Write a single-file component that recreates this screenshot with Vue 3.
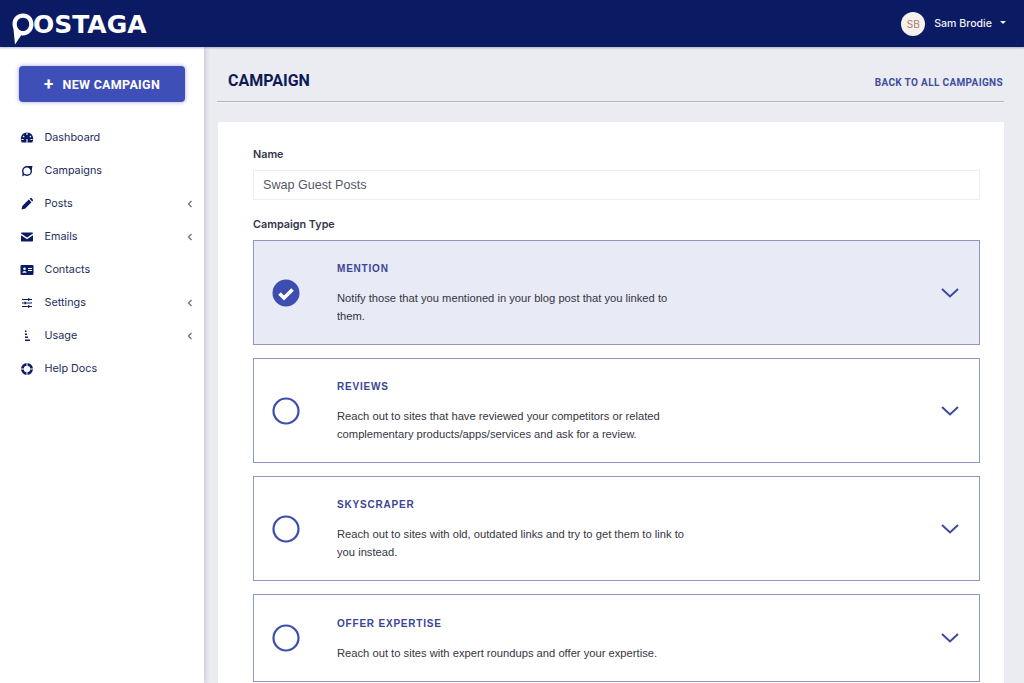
<script setup>
const nav = [
  { label: 'Dashboard', icon: 'dash' },
  { label: 'Campaigns', icon: 'camp' },
  { label: 'Posts', icon: 'pen', more: true },
  { label: 'Emails', icon: 'mail', more: true },
  { label: 'Contacts', icon: 'card' },
  { label: 'Settings', icon: 'sliders', more: true },
  { label: 'Usage', icon: 'usage', more: true },
  { label: 'Help Docs', icon: 'help' },
]
const options = [
  { title: 'MENTION', text: ['Notify those that you mentioned in your blog post that you linked to', 'them.'], selected: true },
  { title: 'REVIEWS', text: ['Reach out to sites that have reviewed your competitors or related', 'complementary products/apps/services and ask for a review.'] },
  { title: 'SKYSCRAPER', text: ['Reach out to sites with old, outdated links and try to get them to link to', 'you instead.'] },
  { title: 'OFFER EXPERTISE', text: ['Reach out to sites with expert roundups and offer your expertise.'] },
]
</script>

<template>
  <div class="page">
    <header class="topbar">
      <div class="logo">
        <svg class="pin" width="23" height="32" viewBox="0 0 23 32">
          <path fill="#fff" fill-rule="evenodd" d="M11 .5C4.900 .5 .5 5 .5 11c0 2 .4 3.700 1 5.200L3 31.500l6.200-9.200c.6.1 1.200.2 1.800.2 6.100 0 10.500-5.200 10.500-11.200C21.500 5 17.100 .5 11 .5zm0 4.300c3.600 0 6.200 2.800 6.200 6.500s-2.600 6.800-6.200 6.800-6.200-3.100-6.200-6.800 2.600-6.500 6.200-6.500z"/>
        </svg>
        <span class="logo-text">OSTAGA</span>
      </div>
      <div class="user">
        <span class="avatar">SB</span>
        <span class="user-name">Sam Brodie</span>
        <span class="caret"></span>
      </div>
    </header>

    <div class="body">
      <aside class="sidebar">
        <button class="new-btn"><span class="plus">+</span>NEW CAMPAIGN</button>
        <nav class="nav">
          <a v-for="item in nav" :key="item.label" class="nav-item">
            <svg class="nav-icon" width="14" height="14" viewBox="0 0 14 14">
              <template v-if="item.icon === 'dash'">
                <path fill="#0b1a63" d="M7 1.500C3.400 1.500 .8 4.300 .8 8c0 1.300 .4 2.500 1 3.500h10.400c.6-1 1-2.200 1-3.500 0-3.700-2.600-6.500-6.200-6.500z"/>
                <path stroke="#fff" stroke-width="1.100" fill="none" d="M7 2v2M3 5l1.300 1.200M11 5 9.700 6.200M1.500 8.500h2M10.500 8.500h2M7 11.500V8"/>
              </template>
              <template v-else-if="item.icon === 'camp'">
                <circle cx="7" cy="7" r="4.300" fill="none" stroke="#0b1a63" stroke-width="1.400"/>
                <path fill="#0b1a63" d="M2.200 12.500 2.800 8.500 5 10.800zM7.500 2h5l-.8 4-1.500-.5z"/>
              </template>
              <path v-else-if="item.icon === 'pen'" fill="#0b1a63" d="M1.500 12.500 2.300 9 8.800 2.500l2.700 2.700L5 11.700zM9.600 1.800l.7-.6c.4-.3 1-.3 1.300 0l1.200 1.200c.3.4.3.9 0 1.300l-.6.700z"/>
              <template v-else-if="item.icon === 'mail'">
                <path fill="#0b1a63" d="M1 3.500C1 2.900 1.400 2.500 2 2.500h10c.6 0 1 .4 1 1L7 7.500 1 3.500zM1 5.200l6 4 6-4v5.300c0 .6-.4 1-1 1H2c-.6 0-1-.4-1-1z"/>
              </template>
              <template v-else-if="item.icon === 'card'">
                <rect x=".5" y="2" width="13" height="10" rx="1.200" fill="#0b1a63"/>
                <circle cx="4.500" cy="5.800" r="1.300" fill="#fff"/>
                <path fill="#fff" d="M2.500 9.800c0-1.200.9-1.900 2-1.900s2 .7 2 1.900zM8 5h4v1H8zM8 7h4v1H8z"/>
              </template>
              <g v-else-if="item.icon === 'sliders'" fill="#0b1a63">
                <path d="M2 3h10v.9H2zM2 6.500h10v.9H2zM2 10h10v.9H2z"/>
                <path d="M8 2.200h1.400v2.500H8zM4.500 5.700h1.400v2.500H4.500zM8 9.200h1.400v2.500H8z"/>
              </g>
              <g v-else-if="item.icon === 'usage'" fill="#0b1a63">
                <path d="M5 1.500h1.500v1.500H5zM5 4.500h2v1.500H5zM5 7.500h3v1.500H5zM5 10.500h5v1.500H5z"/>
              </g>
              <template v-else>
                <circle cx="7" cy="7" r="4.600" fill="none" stroke="#0b1a63" stroke-width="2.800"/>
                <path stroke="#fff" stroke-width="1" d="M7 .8v3.400M7 9.800v3.400M.8 7h3.400M9.800 7h3.400"/>
              </template>
            </svg>
            <span class="nav-label">{{ item.label }}</span>
            <svg v-if="item.more" class="nav-more" width="6" height="8" viewBox="0 0 6 8">
              <path d="M4.500 1 1.500 4l3 3" fill="none" stroke="#6b7088" stroke-width="1.300"/>
            </svg>
          </a>
        </nav>
      </aside>

      <main class="main">
        <div class="title-row">
          <h1 class="title">CAMPAIGN</h1>
          <a class="back">BACK TO ALL CAMPAIGNS</a>
        </div>
        <section class="card">
          <label class="field-label">Name</label>
          <div class="input">Swap Guest Posts</div>
          <label class="field-label type-label">Campaign Type</label>
          <div class="options">
            <div v-for="o in options" :key="o.title" class="option" :class="{ selected: o.selected }">
              <svg v-if="o.selected" class="radio" width="28" height="28" viewBox="0 0 28 28">
                <circle cx="14" cy="14" r="13.500" fill="#3d4db0"/>
                <path d="M7.500 14.500 12 19l8.500-8.500" fill="none" stroke="#fff" stroke-width="3.600"/>
              </svg>
              <svg v-else class="radio" width="28" height="28" viewBox="0 0 28 28">
                <circle cx="14" cy="14" r="12.500" fill="none" stroke="#3d4db0" stroke-width="2.200"/>
              </svg>
              <div class="option-text">
                <div class="option-title">{{ o.title }}</div>
                <p class="option-desc"><span v-for="line in o.text" :key="line" class="line">{{ line }}</span></p>
              </div>
              <svg class="chev" width="18" height="10" viewBox="0 0 18 10">
                <path d="M1 1l8 7.500L17 1" fill="none" stroke="#3a4a9c" stroke-width="2"/>
              </svg>
            </div>
          </div>
        </section>
      </main>
    </div>
  </div>
</template>

<style>
html, body { margin: 0; height: 100%; overflow: hidden; }
</style>

<style scoped>
.page {
  width: 1024px;
  height: 683px;
  overflow: hidden;
  background: #ebecf2;
  font-family: Inter, "Liberation Sans", sans-serif;
  display: flex;
  flex-direction: column;
}
.topbar {
  flex: none;
  height: 47px;
  background: #0a1a63;
  display: flex;
  align-items: flex-start;
  justify-content: space-between;
  padding-right: 18px;
  box-shadow: 0 1px 2px rgba(10, 26, 99, .3);
  position: relative;
  z-index: 2;
}
.logo {
  display: flex;
  align-items: flex-start;
  margin-left: 12px;
  margin-top: 13px;
}
.logo-text {
  color: #fff;
  font-family: "DejaVu Sans", sans-serif;
  font-weight: 700;
  font-size: 25px;
  line-height: 24px;
  letter-spacing: 0;
  margin-left: -2px;
}
.user {
  display: flex;
  align-items: center;
  height: 47px;
}
.avatar {
  width: 24px;
  height: 24px;
  border-radius: 50%;
  background: #f6f1ec;
  color: #a5806f;
  font-size: 10px;
  display: flex;
  align-items: center;
  justify-content: center;
}
.user-name {
  color: #eef0f8;
  font-size: 10.600px;
  font-weight: 500;
  margin-left: 9px;
}
.caret {
  margin-left: 8px;
  margin-bottom: 3px;
  border-left: 3px solid transparent;
  border-right: 3px solid transparent;
  border-top: 3px solid #eef0f8;
}
.body {
  flex: 1;
  display: flex;
  min-height: 0;
}
.sidebar {
  flex: none;
  width: 204px;
  background: #fff;
  box-shadow: 1px 0 5px rgba(40, 45, 80, .22);
  padding: 19px 0 0 0;
  box-sizing: border-box;
  position: relative;
  z-index: 1;
}
.new-btn {
  display: flex;
  align-items: center;
  justify-content: center;
  margin-left: 19px;
  width: 166px;
  height: 36px;
  border: none;
  border-radius: 4px;
  background: #3f4fb8;
  box-shadow: 0 0 4px rgba(63, 79, 184, .5);
  color: #fff;
  font-family: Roboto, sans-serif;
  font-weight: 700;
  font-size: 12.500px;
  letter-spacing: .3px;
}
.plus {
  font-size: 17px;
  line-height: 1;
  margin-right: 9px;
}
.nav {
  margin-top: 19px;
  display: flex;
  flex-direction: column;
}
.nav-item {
  height: 33px;
  display: flex;
  align-items: center;
  padding-left: 20px;
  color: #232c5e;
  font-size: 10.800px;
  font-weight: 400;
}
.nav-icon { flex: none; }
.nav-label { margin-left: 10.500px; flex: 1; }
.nav-more { margin-right: 11px; flex: none; }
.main {
  flex: 1;
  min-width: 0;
  padding: 0 20px 0 13px;
}
.title-row {
  height: 55px;
  border-bottom: 1px solid #b4b6c4;
  box-shadow: 0 1px 0 #f3f4f8;
  display: flex;
  align-items: center;
  justify-content: space-between;
  box-sizing: border-box;
  padding: 14px 1px 0 11px;
}
.title {
  margin: 0 0 2px;
  color: #0e1a56;
  font-family: Roboto, sans-serif;
  font-size: 16px;
  font-weight: 700;
}
.back {
  color: #3f4c9f;
  font-family: Roboto, sans-serif;
  font-size: 10px;
  font-weight: 700;
  letter-spacing: .35px;
  margin-top: 3px;
}
.card {
  margin: 20px 0 0 1px;
  background: #fff;
  padding: 26px 24px 0 35px;
  height: 600px;
  box-sizing: border-box;
}
.field-label {
  display: block;
  color: #33364a;
  font-size: 10.800px;
  font-weight: 600;
  line-height: 13px;
}
.input {
  margin-top: 9px;
  height: 30px;
  box-sizing: border-box;
  border: 1px solid #eceef3;
  padding-left: 9px;
  display: flex;
  align-items: center;
  color: #555866;
  font-size: 12.600px;
  font-family: "Liberation Sans", sans-serif;
}
.type-label { margin-top: 18px; }
.options {
  margin-top: 9px;
  display: flex;
  flex-direction: column;
  gap: 13px;
}
.option {
  flex: none;
  box-sizing: border-box;
  min-height: 88px;
  border: 1px solid #8d96c4;
  display: flex;
  align-items: center;
  padding-left: 18px;
}
.option.selected { background: #e8eaf6; }
.radio { flex: none; }
.option-text {
  margin-left: 37px;
  flex: 1;
  padding: 22px 0 19px;
}
.option-title {
  color: #3a4694;
  font-family: "Liberation Sans", sans-serif;
  font-size: 10px;
  font-weight: 700;
  letter-spacing: .8px;
  line-height: 12px;
}
.option-desc {
  margin: 14px 0 0;
  color: #34363f;
  font-family: "Liberation Sans", sans-serif;
  font-size: 11.200px;
  line-height: 18px;
}
.line { display: block; }
.chev {
  flex: none;
  margin-right: 20px;
}
</style>
